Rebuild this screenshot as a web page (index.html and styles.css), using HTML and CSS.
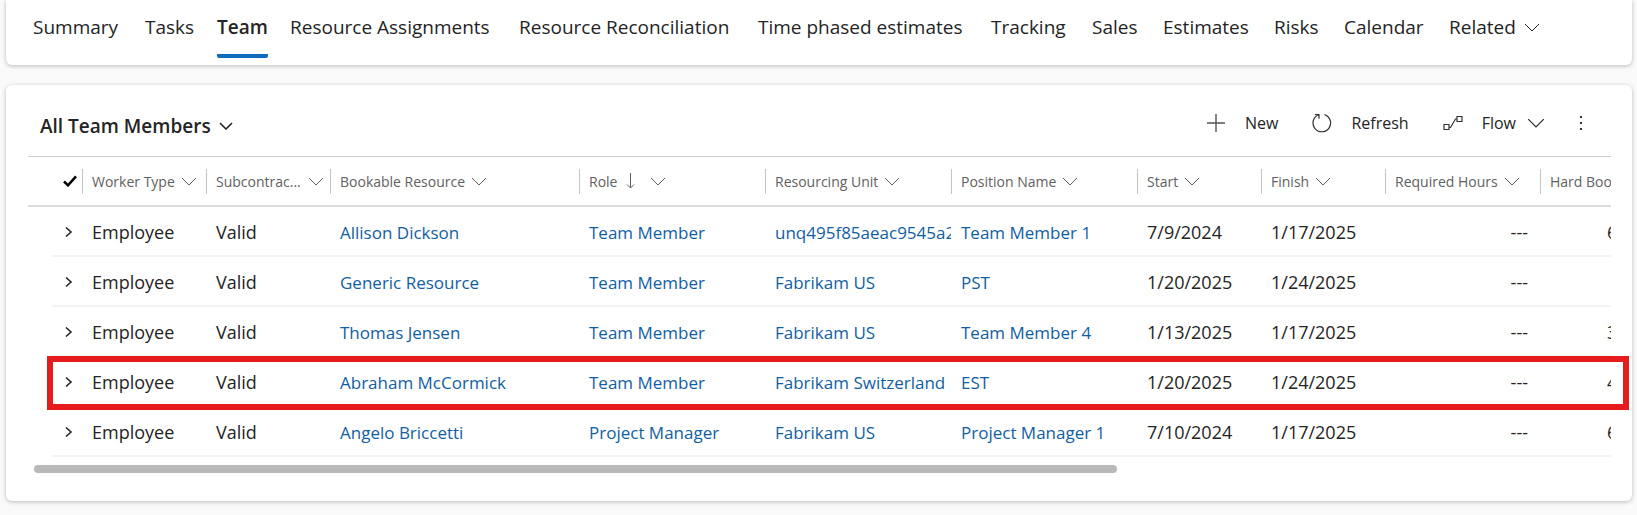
FILE: index.html
```html
<!DOCTYPE html>
<html lang="en">
<head>
<meta charset="utf-8">
<title>Team</title>
<link rel="stylesheet" href="styles.css">
</head>
<body>
<svg class="sprite" aria-hidden="true">
  <symbol id="chev" viewBox="0 0 16 9"><path d="M1 1l7 7 7-7" fill="none" stroke="currentColor" stroke-width="1"/></symbol>
  <symbol id="chev-bold" viewBox="0 0 14 8"><path d="M1 1l6 6 6-6" fill="none" stroke="currentColor" stroke-width="1.6"/></symbol>
  <symbol id="next" viewBox="0 0 8 12"><path d="M1 1.500l5 4.500-5 4.500" fill="none" stroke="currentColor" stroke-width="1.6"/></symbol>
</svg>

<nav class="card tabs" aria-label="Form sections">
  <a class="tab" href="#summary">Summary</a>
  <a class="tab" href="#tasks">Tasks</a>
  <a class="tab tab-active" href="#team" aria-current="page">Team</a>
  <a class="tab" href="#assignments">Resource Assignments</a>
  <a class="tab" href="#reconciliation">Resource Reconciliation</a>
  <a class="tab" href="#estimates-time">Time phased estimates</a>
  <a class="tab" href="#tracking">Tracking</a>
  <a class="tab" href="#sales">Sales</a>
  <a class="tab" href="#estimates">Estimates</a>
  <a class="tab" href="#risks">Risks</a>
  <a class="tab" href="#calendar">Calendar</a>
  <button class="tab tab-menu" type="button">Related <svg class="chev"><use href="#chev"/></svg></button>
</nav>

<main class="card panel">
  <header class="panel-head">
    <button class="view" type="button">All Team Members <svg class="chev-bold"><use href="#chev-bold"/></svg></button>
    <div class="commands">
      <button class="cmd" type="button"><svg class="cmd-icon" viewBox="0 0 20 20"><path d="M10 1v18M1 10h18" fill="none" stroke="#555" stroke-width="1.4"/></svg>New</button>
      <button class="cmd" type="button"><svg class="cmd-icon" viewBox="0 0 20 20"><path d="M12.500 1.600A8.800 8.800 0 1 1 6.800 1.700M2.800 1.500h4.200v4.300" fill="none" stroke="#333" stroke-width="1.2"/></svg>Refresh</button>
      <button class="cmd" type="button"><svg class="cmd-icon" viewBox="0 0 20 20"><path d="M1 11.500h5v5H1zM14 3.500h5v5h-5zM6 14.500h1.500L12.500 6H14" fill="none" stroke="#333" stroke-width="1.2"/></svg>Flow<svg class="chev chev-cmd"><use href="#chev"/></svg></button>
      <button class="more" type="button" aria-label="More commands"><svg class="dots" viewBox="0 0 4 16"><path d="M1 1h2v2H1zM1 7h2v2H1zM1 13h2v2H1z" fill="#333"/></svg></button>
    </div>
  </header>

  <div class="grid">
    <div class="viewport">
      <table class="members">
        <colgroup><col class="w-gutter"><col class="w-expand"><col class="w-s"><col class="w-s"><col class="w-l"><col class="w-m"><col class="w-m"><col class="w-m"><col class="w-s"><col class="w-s"><col class="w-hours"><col class="w-hours"></colgroup>
        <thead>
          <tr>
            <th class="check" colspan="2"><svg class="tick" viewBox="0 0 14 12"><path d="M1 6.500l4 3.800L13 1.300" fill="none" stroke="#000" stroke-width="2.500"/></svg></th>
            <th><span class="h">Worker Type <svg class="chev"><use href="#chev"/></svg></span></th>
            <th><span class="h h-full">Subcontrac... <svg class="chev"><use href="#chev"/></svg></span></th>
            <th><span class="h">Bookable Resource <svg class="chev"><use href="#chev"/></svg></span></th>
            <th><span class="h h-sort">Role <svg class="sort" viewBox="0 0 8 16"><path d="M4 0v15M.5 11.500L4 15l3.500-3.500" fill="none" stroke="currentColor"/></svg><svg class="chev"><use href="#chev"/></svg></span></th>
            <th><span class="h">Resourcing Unit <svg class="chev"><use href="#chev"/></svg></span></th>
            <th><span class="h">Position Name <svg class="chev"><use href="#chev"/></svg></span></th>
            <th><span class="h">Start <svg class="chev"><use href="#chev"/></svg></span></th>
            <th><span class="h">Finish <svg class="chev"><use href="#chev"/></svg></span></th>
            <th><span class="h">Required Hours <svg class="chev"><use href="#chev"/></svg></span></th>
            <th><span class="h">Hard Boo</span></th>
          </tr>
        </thead>
        <tbody>
          <tr><td class="gutter"></td><td class="exp"><button class="expand" type="button" aria-label="Expand"><svg class="next"><use href="#next"/></svg></button></td><td>Employee</td><td>Valid</td><td><a href="#r1">Allison Dickson</a></td><td><a href="#o1">Team Member</a></td><td><a href="#u1">unq495f85aeac9545a2a</a></td><td><a href="#p1">Team Member 1</a></td><td>7/9/2024</td><td>1/17/2025</td><td class="num">---</td><td class="booked">6</td></tr>
          <tr><td class="gutter"></td><td class="exp"><button class="expand" type="button" aria-label="Expand"><svg class="next"><use href="#next"/></svg></button></td><td>Employee</td><td>Valid</td><td><a href="#r2">Generic Resource</a></td><td><a href="#o2">Team Member</a></td><td><a href="#u2">Fabrikam US</a></td><td><a href="#p2">PST</a></td><td>1/20/2025</td><td>1/24/2025</td><td class="num">---</td><td class="booked"></td></tr>
          <tr><td class="gutter"></td><td class="exp"><button class="expand" type="button" aria-label="Expand"><svg class="next"><use href="#next"/></svg></button></td><td>Employee</td><td>Valid</td><td><a href="#r3">Thomas Jensen</a></td><td><a href="#o3">Team Member</a></td><td><a href="#u3">Fabrikam US</a></td><td><a href="#p3">Team Member 4</a></td><td>1/13/2025</td><td>1/17/2025</td><td class="num">---</td><td class="booked">3</td></tr>
          <tr><td class="gutter"></td><td class="exp"><button class="expand" type="button" aria-label="Expand"><svg class="next"><use href="#next"/></svg></button></td><td>Employee</td><td>Valid</td><td><a href="#r4">Abraham McCormick</a></td><td><a href="#o4">Team Member</a></td><td><a href="#u4">Fabrikam Switzerland</a></td><td><a href="#p4">EST</a></td><td>1/20/2025</td><td>1/24/2025</td><td class="num">---</td><td class="booked">4</td></tr>
          <tr><td class="gutter"></td><td class="exp"><button class="expand" type="button" aria-label="Expand"><svg class="next"><use href="#next"/></svg></button></td><td>Employee</td><td>Valid</td><td><a href="#r5">Angelo Briccetti</a></td><td><a href="#o5">Project Manager</a></td><td><a href="#u5">Fabrikam US</a></td><td><a href="#p5">Project Manager 1</a></td><td>7/10/2024</td><td>1/17/2025</td><td class="num">---</td><td class="booked">6</td></tr>
        </tbody>
      </table>
    </div>
    <div class="highlight"></div>
    <div class="scroll-track"><div class="scroll-thumb"></div></div>
  </div>
</main>
</body>
</html>
```
FILE: styles.css
```css
* { box-sizing: border-box; }

body {
  margin: 0;
  padding: 0 5px 14px 6px;
  background: #fafafa;
  color: #242424;
  font-family: "Open Sans", "Noto Sans", sans-serif;
  font-size: 17px;
}

.sprite { display: none; }

button {
  margin: 0;
  padding: 0;
  border: 0;
  background: none;
  color: inherit;
  font: inherit;
}

a { color: inherit; text-decoration: none; }

.card {
  background: #fff;
  box-shadow: 0 1px 4px rgba(0, 0, 0, .26);
}

.chev { width: 16px; height: 9px; flex: none; }

/* Tab strip */
.tabs {
  display: grid;
  grid-template-columns: 112px 72px 73px 229px 239px 233px 101px 71px 111px 70px 105px 1fr;
  height: 65px;
  margin-bottom: 20px;
  padding: 0 28px 7px 27px;
  border-radius: 0 0 6px 6px;
  font-size: 19px;
  line-height: 54px;
  white-space: nowrap;
}

.tab { justify-self: start; height: 58px; }

.tab-active {
  border-bottom: 4px solid #0f6cbd;
  border-radius: 2px;
  font-weight: 600;
}

.tab-menu { display: flex; align-items: center; gap: 8px; height: 54px; }

/* Panel */
.panel {
  padding: 0 21px 28px 22px;
  border-radius: 6px;
}

.panel-head {
  display: flex;
  justify-content: space-between;
  height: 71px;
  padding: 14px 28px 0 12px;
}

.view {
  display: flex;
  align-items: center;
  gap: 8px;
  height: 54px;
  font-size: 19px;
  font-weight: 600;
}

.chev-bold { width: 14px; height: 8px; }

.commands { display: flex; gap: 34px; height: 48px; font-size: 16px; }

.cmd { display: flex; align-items: center; gap: 19px; }
.cmd-icon { width: 20px; height: 20px; }
.chev-cmd { width: 18px; height: 10px; margin-left: -8px; }
.more { display: flex; align-items: center; }
.dots { width: 4px; height: 16px; }

/* Table */
.grid { position: relative; }

.viewport { overflow: hidden; border-top: 1px solid #d1d1d1; }

.members {
  width: 1667px;
  border-collapse: separate;
  border-spacing: 0;
  table-layout: fixed;
}

.w-gutter { width: 24px; }
.w-expand { width: 30px; }
.w-s { width: 124px; }
.w-m { width: 186px; }
.w-l { width: 249px; }
.w-hours { width: 155px; }

th, td { padding: 0; text-align: left; white-space: nowrap; overflow: hidden; }

th {
  height: 50px;
  border-bottom: 2px solid #dcdcdc;
  color: #616161;
  font-size: 14px;
  font-weight: 400;
}

.h {
  display: flex;
  align-items: center;
  gap: 6px;
  height: 25px;
  padding-left: 9px;
  border-left: 1px solid #c4c4c4;
}

.h-full { justify-content: space-between; padding-right: 6px; }
.h-sort { gap: 9px; }
.h-sort .chev { margin-left: 6px; }
.sort { width: 9px; height: 16px; }
.check { padding-left: 35px; }
.tick { display: block; width: 14px; height: 12px; }

td {
  height: 50px;
  padding: 2px 0 0 10px;
  border-bottom: 2px solid #f3f3f3;
  font-size: 18px;
}

td a { color: #115ea3; font-size: 17px; }

.gutter { border-bottom: 0; }
.expand { display: flex; align-items: center; height: 24px; }
.exp { padding-left: 13px; }
.next { width: 8px; height: 12px; }
.num { padding-right: 12px; text-align: right; }
.booked { padding-left: 67px; }

/* Marks the fourth row */
.highlight {
  position: absolute;
  top: 200px;
  right: -18px;
  left: 19px;
  height: 54px;
  border: 6px solid #e61c1c;
  pointer-events: none;
}

.scroll-track { padding: 8px 0 0 6px; }

.scroll-thumb {
  width: 68.7%;
  height: 8px;
  border-radius: 4px;
  background: #b9b9b9;
}
```
